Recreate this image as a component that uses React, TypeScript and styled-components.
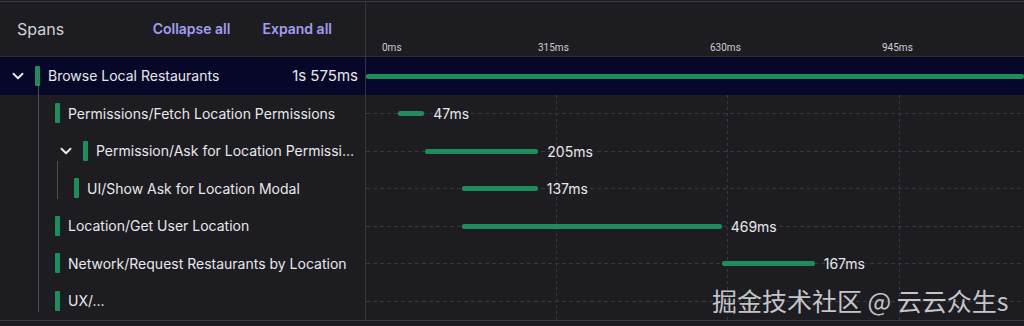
import React from "react";
import styled, { createGlobalStyle } from "styled-components";
import { ChevronDown } from "lucide-react";

const GlobalStyle = createGlobalStyle`
  html, body {
    margin: 0;
    padding: 0;
    background: #1b1b20;
    font-family: Inter, "Noto Sans", sans-serif;
    overflow: hidden;
  }
`;

const ROW_H = 37.5;
const PX_PER_MS = 0.554;
const GREEN = "#1f8c5b";

type Span = {
  name: string;
  duration: string;
  start: number;
  ms: number;
  indent: number;
  chevron?: boolean;
  selected?: boolean;
  children?: Span[];
};

const root: Span = {
  name: "Browse Local Restaurants",
  duration: "1s 575ms",
  start: 0,
  ms: 1575,
  indent: 9,
  chevron: true,
  selected: true,
  children: [
    { name: "Permissions/Fetch Location Permissions", duration: "47ms", start: 58, ms: 47, indent: 55 },
    {
      name: "Permission/Ask for Location Permissions",
      duration: "205ms",
      start: 106,
      ms: 205,
      indent: 57,
      chevron: true,
      children: [
        { name: "UI/Show Ask for Location Modal", duration: "137ms", start: 173, ms: 137, indent: 74 },
      ],
    },
    { name: "Location/Get User Location", duration: "469ms", start: 173, ms: 469, indent: 55 },
    { name: "Network/Request Restaurants by Location", duration: "167ms", start: 643, ms: 167, indent: 55 },
    { name: "UX/...", duration: "", start: 0, ms: 0, indent: 55 },
  ],
};

const flatten = (s: Span): Span[] => [s, ...(s.children ?? []).flatMap(flatten)];

const ticks = [
  { label: "0ms", left: 16 },
  { label: "315ms", left: 172 },
  { label: "630ms", left: 344 },
  { label: "945ms", left: 516 },
];
const gridLines = [190, 361, 533];

const Frame = styled.div`
  position: relative;
  display: grid;
  grid-template-columns: 366px 1fr;
  width: 1024px;
  height: 318px;
  margin-top: 1px;
  border-top: 1px solid #3a3a40;
  border-bottom: 1px solid #3a3a40;
  background: #1c1c21;
`;

const LeftPanel = styled.div`
  border-right: 1px solid #34343a;
  display: flex;
  flex-direction: column;
  min-width: 0;
`;

const RightPanel = styled.div`
  display: flex;
  flex-direction: column;
  position: relative;
  overflow: hidden;
`;

const PanelHeader = styled.div`
  height: 55px;
  box-sizing: border-box;
  border-bottom: 1px solid #2e2e34;
  background: #1d1d21;
  display: flex;
  align-items: center;
  padding: 0 33px 0 17px;
`;

const Title = styled.span`
  color: #d2d2d7;
  font-size: 16px;
  flex: 1;
  margin-top: -1px;
`;

const LinkButton = styled.button<{ $gap: number }>`
  background: none;
  border: none;
  padding: 0;
  font-family: inherit;
  font-size: 14px;
  font-weight: 600;
  color: #a29df0;
  margin-left: ${(p) => p.$gap}px;
  margin-top: -1px;
  cursor: pointer;
`;

const TimeHeader = styled.div`
  height: 55px;
  box-sizing: border-box;
  border-bottom: 1px solid #2e2e34;
  background: #1d1d21;
  position: relative;
`;

const TickLabel = styled.span`
  position: absolute;
  top: 40px;
  font-family: Roboto, sans-serif;
  font-size: 10px;
  color: #cfcfd4;
`;

const TreeRow = styled.div<{ $indent: number; $selected?: boolean }>`
  height: ${ROW_H}px;
  display: flex;
  align-items: center;
  padding-left: ${(p) => p.$indent}px;
  padding-right: 9px;
  background: ${(p) => (p.$selected ? "#07072a" : "transparent")};
  color: #e8e8ec;
  font-size: 14px;
  white-space: nowrap;
`;

const Chevron = styled(ChevronDown)`
  flex: none;
  margin-right: 8px;
  color: #e8e8ec;
`;

const Marker = styled.span`
  flex: none;
  width: 5px;
  height: 20px;
  border-radius: 1px;
  background: ${GREEN};
  margin-right: 8px;
`;

const Name = styled.span`
  flex: 1;
  overflow: hidden;
  text-overflow: ellipsis;
`;

const Duration = styled.span`
  flex: none;
  font-size: 15px;
  margin: 0 -2px 0 10px;
`;

const Group = styled.div<{ $line: number }>`
  position: relative;
  &::before {
    content: "";
    position: absolute;
    left: ${(p) => p.$line}px;
    top: -9px;
    bottom: 8px;
    width: 1px;
    background: #4c4c53;
  }
`;

const TimeRows = styled.div`
  position: relative;
  flex: 1;
`;

const GridLine = styled.div`
  position: absolute;
  top: ${ROW_H}px;
  bottom: 0;
  width: 1px;
  background: repeating-linear-gradient(to bottom, #37373e 0 3px, transparent 3px 6px);
`;

const TimeRow = styled.div<{ $selected?: boolean }>`
  position: relative;
  height: ${ROW_H}px;
  background: ${(p) => (p.$selected ? "#07072a" : "transparent")};
  &::before {
    content: "";
    display: ${(p) => (p.$selected ? "none" : "block")};
    position: absolute;
    left: 0;
    right: 0;
    top: 50%;
    height: 1px;
    background: repeating-linear-gradient(to right, #37373e 0 4px, transparent 4px 7px);
  }
`;

const Bar = styled.div`
  position: absolute;
  top: 50%;
  height: 5px;
  margin-top: -2px;
  border-radius: 2px;
  background: ${GREEN};
`;

const BarLabel = styled.span`
  position: absolute;
  top: 50%;
  transform: translateY(-50%);
  color: #e8e8ec;
  font-size: 14px;
`;

const Watermark = styled.div`
  position: absolute;
  left: 712px;
  top: 280px;
  font-family: "Noto Sans CJK SC", sans-serif;
  font-size: 25px;
  color: rgba(236, 236, 240, 0.82);
  pointer-events: none;
  white-space: nowrap;
`;

const TreeNode = ({ span }: { span: Span }) => (
  <>
    <TreeRow $indent={span.indent} $selected={span.selected}>
      {span.chevron && <Chevron size={18} strokeWidth={2.6} />}
      <Marker />
      <Name>{span.name}</Name>
      {span.selected && <Duration>{span.duration}</Duration>}
    </TreeRow>
    {span.children && (
      <Group $line={span.selected ? 38 : 57}>
        {span.children.map((c) => (
          <TreeNode key={c.name} span={c} />
        ))}
      </Group>
    )}
  </>
);

export default function App() {
  const rows = flatten(root);
  return (
    <>
      <GlobalStyle />
      <Frame>
        <LeftPanel>
          <PanelHeader>
            <Title>Spans</Title>
            <LinkButton $gap={0}>Collapse all</LinkButton>
            <LinkButton $gap={32}>Expand all</LinkButton>
          </PanelHeader>
          <TreeNode span={root} />
        </LeftPanel>
        <RightPanel>
          <TimeHeader>
            {ticks.map((t) => (
              <TickLabel key={t.label} style={{ left: t.left }}>
                {t.label}
              </TickLabel>
            ))}
          </TimeHeader>
          <TimeRows>
            {gridLines.map((x) => (
              <GridLine key={x} style={{ left: x }} />
            ))}
            {rows.map((r) => (
              <TimeRow key={r.name} $selected={r.selected}>
                {r.ms > 0 && (
                  <>
                    <Bar
                      style={{
                        left: r.start * PX_PER_MS,
                        width: r.selected ? "100%" : r.ms * PX_PER_MS,
                      }}
                    />
                    {!r.selected && (
                      <BarLabel style={{ left: (r.start + r.ms) * PX_PER_MS + 9 }}>
                        {r.duration}
                      </BarLabel>
                    )}
                  </>
                )}
              </TimeRow>
            ))}
          </TimeRows>
        </RightPanel>
        <Watermark>掘金技术社区 @ 云云众生s</Watermark>
      </Frame>
    </>
  );
}
